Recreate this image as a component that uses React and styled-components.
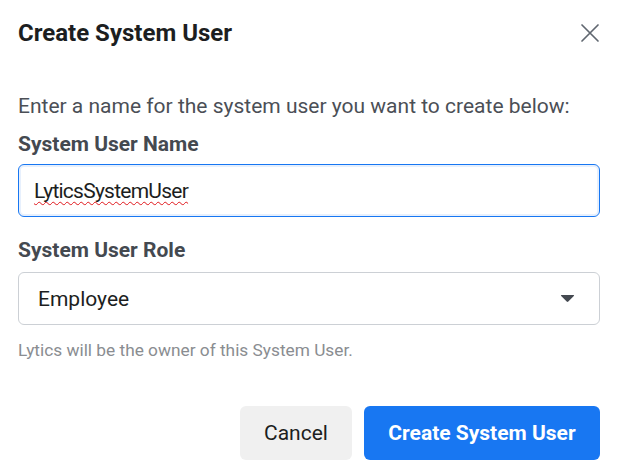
import React from "react";
import styled, { createGlobalStyle } from "styled-components";

const Global = createGlobalStyle`
  html, body { margin: 0; padding: 0; background: #fff; }
  body { font-family: Roboto, "Liberation Sans", sans-serif; -webkit-font-smoothing: antialiased; }
  * { box-sizing: border-box; }
`;

const Dialog = styled.div`
  width: 622px;
  height: 474px;
  background: #fff;
  display: flex;
  flex-direction: column;
`;

const Header = styled.div`
  height: 66px;
  padding: 0 22px 0 18px;
  display: flex;
  align-items: center;
  justify-content: space-between;
`;

const Title = styled.h2`
  margin: 0;
  font-size: 24px;
  font-weight: 700;
  color: #1c1e21;
  line-height: 28px;
`;

const CloseButton = styled.button`
  border: 0;
  background: transparent;
  padding: 0;
  width: 24px;
  height: 24px;
  display: flex;
  align-items: center;
  justify-content: center;
  margin-right: -2px;
  cursor: pointer;
`;

const Body = styled.div`
  padding: 28px 22px 0 18px;
  display: flex;
  flex-direction: column;
`;

const Intro = styled.p`
  margin: 0;
  font-size: 21px;
  line-height: 24px;
  color: #4b4f56;
`;

const Label = styled.label`
  display: block;
  margin-top: ${(p) => p.$mt}px;
  font-size: 21px;
  line-height: 24px;
  font-weight: 700;
  color: #444950;
`;

const Field = styled.div`
  margin-top: ${(p) => p.$mt}px;
  height: 53px;
  border-radius: 6px;
  border: 1px solid ${(p) => (p.$focused ? "#1877f2" : "#ccd0d5")};
  box-shadow: ${(p) => (p.$focused ? "inset 0 0 0 2px #e7f0fd" : "none")};
  display: flex;
  align-items: center;
  padding: 0 ${(p) => (p.$focused ? 15 : 19)}px;
  background: #fff;
`;

const TextValue = styled.span`
  font-size: 21px;
  letter-spacing: -0.75px;
  color: #1c1e21;
  text-decoration: underline wavy #e0161b;
  text-decoration-thickness: 1.4px;
  text-underline-offset: 3px;
  text-decoration-skip-ink: none;
`;

const SelectValue = styled.span`
  flex: 1;
  font-size: 21px;
  color: #1c1e21;
`;

const Helper = styled.p`
  margin: 15px 0 0;
  font-size: 17.3px;
  line-height: 20px;
  color: #8a8d91;
`;

const Footer = styled.div`
  margin-top: 46px;
  padding: 0 22px 0 18px;
  display: flex;
  justify-content: flex-end;
  gap: 12px;
`;

const Button = styled.button`
  height: 54px;
  width: ${(p) => p.$w}px;
  border: 0;
  border-radius: 6px;
  font-family: inherit;
  font-size: 21px;
  font-weight: ${(p) => (p.$primary ? 700 : 400)};
  color: ${(p) => (p.$primary ? "#fff" : "#1c1e21")};
  background: ${(p) => (p.$primary ? "#1877f2" : "#f0f0f0")};
  cursor: pointer;
`;

export default function App() {
  return (
    <>
      <Global />
      <Dialog>
        <Header>
          <Title>Create System User</Title>
          <CloseButton aria-label="Close">
            <svg width="20" height="20" viewBox="0 0 20 20">
              <path d="M2 2 L18 18 M18 2 L2 18" stroke="#606770" strokeWidth="1.7" strokeLinecap="round" />
            </svg>
          </CloseButton>
        </Header>
        <Body>
          <Intro>Enter a name for the system user you want to create below:</Intro>
          <Label $mt={14}>System User Name</Label>
          <Field $mt={8} $focused role="textbox">
            <TextValue>LyticsSystemUser</TextValue>
          </Field>
          <Label $mt={21}>System User Role</Label>
          <Field $mt={10}>
            <SelectValue>Employee</SelectValue>
            <svg width="15" height="9" viewBox="0 0 15 9" style={{ marginRight: 5 }}>
              <path d="M1.5 1 H13.5 Q14.6 1 13.8 1.9 L8.3 7.6 Q7.5 8.4 6.7 7.6 L1.2 1.9 Q0.4 1 1.5 1 Z" fill="#444950" />
            </svg>
          </Field>
          <Helper>Lytics will be the owner of this System User.</Helper>
        </Body>
        <Footer>
          <Button $w={112}>Cancel</Button>
          <Button $w={236} $primary>Create System User</Button>
        </Footer>
      </Dialog>
    </>
  );
}
